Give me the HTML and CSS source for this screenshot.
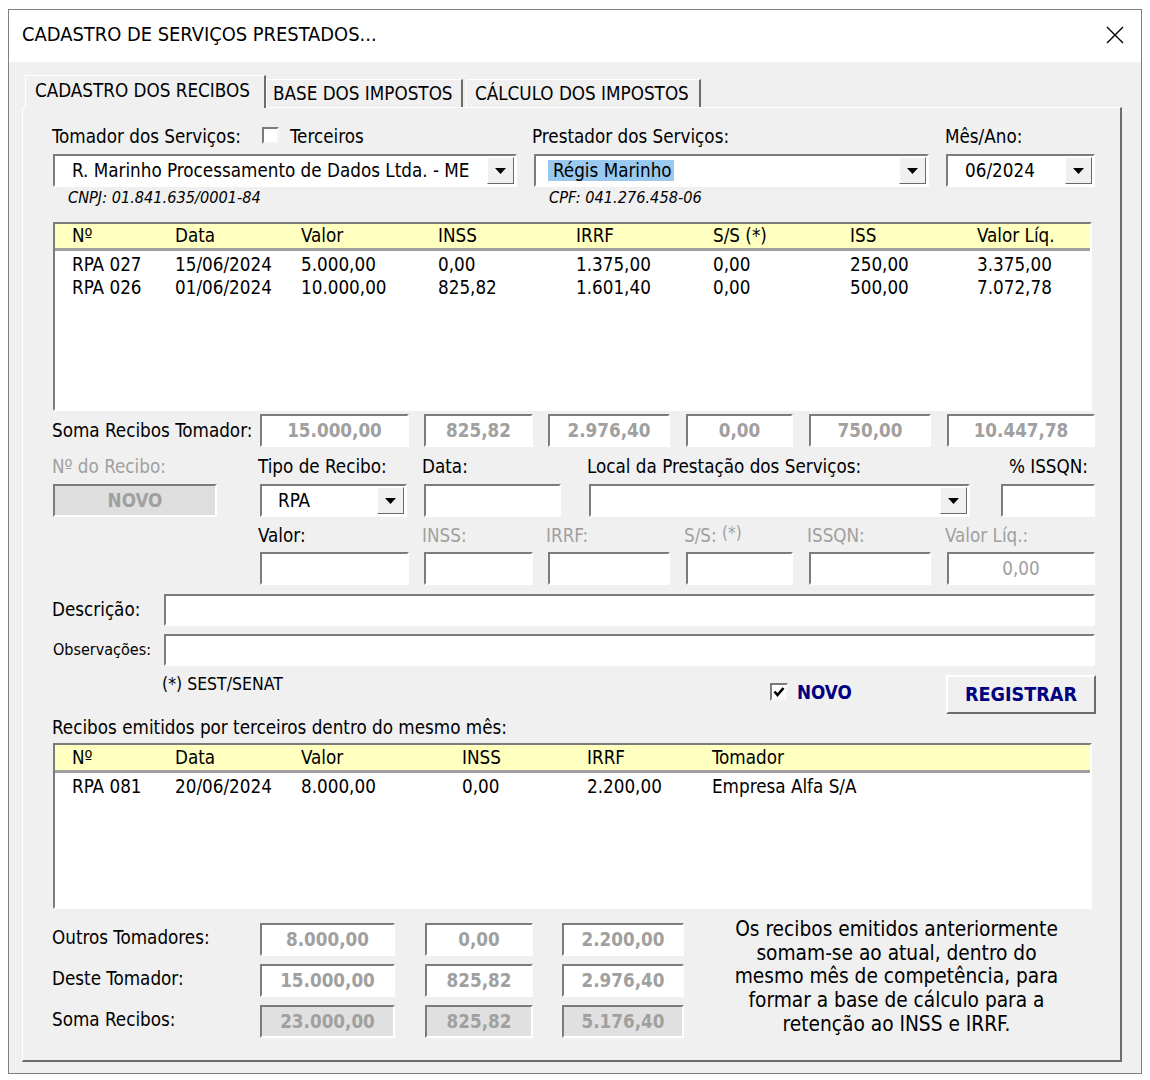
FILE: index.html
```html
<!DOCTYPE html>
<html lang="pt-BR">
<head>
<meta charset="utf-8">
<title>Cadastro de Serviços Prestados</title>
<link rel="stylesheet" href="styles.css">
</head>
<body>
<div class="window">
  <div class="titlebar">
    <span class="title">CADASTRO DE SERVIÇOS PRESTADOS...</span>
    <svg class="close" viewBox="0 0 20 20"><path d="M2 2L18 18M18 2L2 18" stroke="#000" stroke-width="1.4" fill="none"/></svg>
  </div>
  <div class="client">
    <div class="tabs">
      <div class="tab active">CADASTRO DOS RECIBOS</div>
      <div class="tab t2">BASE DOS IMPOSTOS</div>
      <div class="tab t3">CÁLCULO DOS IMPOSTOS</div>
    </div>
    <div class="panel">
      <div class="row rowA">
        <div class="cellA1"><span class="lblTom">Tomador dos Serviços:</span><span class="chk"></span><span>Terceiros</span></div>
        <div class="cellA2">Prestador dos Serviços:</div>
        <div>Mês/Ano:</div>
      </div>
      <div class="row rowB">
        <div class="combo cb1"><span class="ctext">R. Marinho Processamento de Dados Ltda. - ME</span><span class="ddbtn"><svg class="tri" viewBox="0 0 11 6"><path d="M0 0H11L5.5 6Z"/></svg></span></div>
        <div class="combo cb2"><span class="ctext"><span class="sel">Régis Marinho</span></span><span class="ddbtn"><svg class="tri" viewBox="0 0 11 6"><path d="M0 0H11L5.5 6Z"/></svg></span></div>
        <div class="combo cb3"><span class="ctext">06/2024</span><span class="ddbtn"><svg class="tri" viewBox="0 0 11 6"><path d="M0 0H11L5.5 6Z"/></svg></span></div>
      </div>
      <div class="row rowC">
        <div class="cellC1">CNPJ: 01.841.635/0001-84</div>
        <div class="cellC2">CPF: 041.276.458-06</div>
      </div>

      <div class="grid g1">
        <div class="ghead cols1"><span>Nº</span><span>Data</span><span>Valor</span><span>INSS</span><span>IRRF</span><span>S/S (*)</span><span>ISS</span><span>Valor Líq.</span></div>
        <div class="grows">
          <div class="cols1"><span>RPA 027</span><span>15/06/2024</span><span>5.000,00</span><span>0,00</span><span>1.375,00</span><span>0,00</span><span>250,00</span><span>3.375,00</span></div>
          <div class="cols1"><span>RPA 026</span><span>01/06/2024</span><span>10.000,00</span><span>825,82</span><span>1.601,40</span><span>0,00</span><span>500,00</span><span>7.072,78</span></div>
        </div>
      </div>

      <div class="cols7 sumrow">
        <span>Soma Recibos Tomador:</span>
        <div class="box ro w1">15.000,00</div>
        <div class="box ro w2">825,82</div>
        <div class="box ro w3">2.976,40</div>
        <div class="box ro w4">0,00</div>
        <div class="box ro w5">750,00</div>
        <div class="box ro w6">10.447,78</div>
      </div>

      <div class="row rowL2">
        <span class="l2a dis">Nº do Recibo:</span>
        <span class="l2b">Tipo de Recibo:</span>
        <span class="l2c">Data:</span>
        <span class="l2d">Local da Prestação dos Serviços:</span>
        <span class="l2e">% ISSQN:</span>
      </div>
      <div class="row rowI2">
        <div class="box novo">NOVO</div>
        <div class="combo rpa"><span class="ctext">RPA</span><span class="ddbtn"><svg class="tri" viewBox="0 0 11 6"><path d="M0 0H11L5.5 6Z"/></svg></span></div>
        <div class="box data"></div>
        <div class="combo local"><span class="ctext"></span><span class="ddbtn"><svg class="tri" viewBox="0 0 11 6"><path d="M0 0H11L5.5 6Z"/></svg></span></div>
        <div class="box pct"></div>
      </div>

      <div class="cols7 rowL3">
        <span></span>
        <span class="l3">Valor:</span>
        <span class="l3 dis">INSS:</span>
        <span class="l3 dis">IRRF:</span>
        <span class="l3 dis">S/S: <span class="sup">(*)</span></span>
        <span class="l3 dis">ISSQN:</span>
        <span class="l3 dis">Valor Líq.:</span>
      </div>
      <div class="cols7 rowI3">
        <span></span>
        <div class="box w1"></div>
        <div class="box w2"></div>
        <div class="box w3"></div>
        <div class="box w4"></div>
        <div class="box w5"></div>
        <div class="box w6 liq">0,00</div>
      </div>

      <div class="row rowD">
        <span class="lblD">Descrição:</span>
        <div class="box wide"></div>
      </div>
      <div class="row rowO">
        <span class="lblD lblO">Observações:</span>
        <div class="box wide"></div>
      </div>

      <div class="row rowS">
        <span class="sest">(*) SEST/SENAT</span>
        <span class="chk chk2"><svg viewBox="0 0 12 12" class="tick"><path d="M1.5 5.5L4.5 9L10.5 2" stroke="#000" stroke-width="2.6" fill="none"/></svg></span>
        <span class="novolbl">NOVO</span>
        <div class="btn">REGISTRAR</div>
      </div>

      <div class="row rowR">Recibos emitidos por terceiros dentro do mesmo mês:</div>

      <div class="grid g2">
        <div class="ghead cols2"><span>Nº</span><span>Data</span><span>Valor</span><span>INSS</span><span>IRRF</span><span>Tomador</span></div>
        <div class="grows">
          <div class="cols2"><span>RPA 081</span><span>20/06/2024</span><span>8.000,00</span><span>0,00</span><span>2.200,00</span><span>Empresa Alfa S/A</span></div>
        </div>
      </div>

      <div class="bottom">
        <div class="bleft">
          <div class="brow">
            <span>Outros Tomadores:</span>
            <div class="box ro b1">8.000,00</div>
            <div class="box ro b2">0,00</div>
            <div class="box ro b3">2.200,00</div>
          </div>
          <div class="brow">
            <span>Deste Tomador:</span>
            <div class="box ro b1">15.000,00</div>
            <div class="box ro b2">825,82</div>
            <div class="box ro b3">2.976,40</div>
          </div>
          <div class="brow last">
            <span>Soma Recibos:</span>
            <div class="box ro gray b1">23.000,00</div>
            <div class="box ro gray b2">825,82</div>
            <div class="box ro gray b3">5.176,40</div>
          </div>
        </div>
        <p class="note">Os recibos emitidos anteriormente<br>somam-se ao atual, dentro do<br>mesmo mês de competência, para<br>formar a base de cálculo para a<br>retenção ao INSS e IRRF.</p>
      </div>
    </div>
  </div>
</div>
</body>
</html>
```

FILE: styles.css
```css
* { box-sizing: border-box; }
html, body { margin: 0; padding: 0; background: #fff; }
body {
  font-family: "DejaVu Sans Condensed", "DejaVu Sans", sans-serif;
  font-stretch: condensed;
  font-size: 18.7px;
  line-height: 22px;
  color: #000;
}
.window {
  margin: 9px 0 0 8px;
  width: 1134px;
  height: 1065px;
  border: 1px solid #7f7f7f;
  background: #f0f0f0;
  display: flex;
  flex-direction: column;
}
.titlebar {
  height: 52px;
  flex: none;
  background: #fff;
  display: flex;
  align-items: center;
  justify-content: space-between;
  padding: 0 16px 2px 13px;
}
.title { font-size: 19.9px; }
.close { width: 20px; height: 20px; display: block; }
.client { flex: 1; padding: 13px 0 0 13px; }

.tabs { display: flex; align-items: flex-end; height: 33px; margin-bottom: -1px; }
.tab {
  height: 28px;
  margin-bottom: 1px;
  display: flex;
  align-items: center;
  border-top: 1px solid #fff;
  border-left: 1px solid #fff;
  border-right: 2px solid #6d6d6d;
  background: #f0f0f0;
  white-space: nowrap;
}
.tab.active {
  position: relative;
  z-index: 1;
  height: 33px;
  margin-bottom: 0;
  width: 241px;
  margin-left: 3px;
  padding: 0 0 3px 9px;
}
.t2 { width: 197px; padding-left: 6px; }
.t3 { width: 235px; margin-left: 3px; padding-left: 8px; }

.panel {
  width: 1100px;
  height: 955px;
  border-top: 1px solid #fff;
  border-left: 1px solid #fff;
  border-right: 2px solid #6d6d6d;
  border-bottom: 2px solid #6d6d6d;
  padding: 18px 25px 0 29px;
}
.row { display: flex; align-items: center; }
.dis { color: #a0a0a0; }

/* row A */
.rowA { height: 22px; }
.cellA1 { width: 480px; display: flex; align-items: center; }
.lblTom { width: 210px; }
.chk {
  width: 17px; height: 17px; background: #fff;
  border: 2px solid; border-color: #7c7c7c #f4f4f4 #f4f4f4 #7c7c7c;
  margin: -4px 11px 0 0;
  display: flex; align-items: center; justify-content: center;
}
.cellA2 { width: 413px; }

/* combos */
.rowB { margin-top: 6px; height: 33px; }
.combo {
  height: 33px; background: #fff;
  border: 2px solid; border-color: #7c7c7c #fff #fff #7c7c7c;
  display: flex; align-items: center;
  flex: none;
}
.ctext { flex: 1; white-space: nowrap; overflow: hidden; }
.ddbtn {
  width: 27px; height: 27px; flex: none; margin-right: 1px;
  background: #f0f0f0;
  border: 1px solid; border-color: #fff #696969 #696969 #fff;
  display: flex; align-items: center; justify-content: center;
}
.tri { width: 11px; height: 6px; display: block; }
.cb1 { width: 464px; margin-left: 1px; padding-left: 17px; }
.cb2 { width: 395px; margin-left: 17px; padding-left: 12px; }
.cb3 { width: 149px; margin-left: 17px; padding-left: 17px; }
.sel { background: #99c9ef; padding: 0 2px 0 5px; }

.rowC { margin-top: 2px; height: 18px; font-size: 16.2px; font-style: italic; line-height: 18px; }
.cellC1 { width: 480px; padding-left: 16px; }
.cellC2 { padding-left: 17px; }

/* grids */
.grid {
  background: #fff;
  border: 2px solid; border-color: #7c7c7c #fff #fff #7c7c7c;
  margin-left: 1px;
  width: 1039px;
}
.g1 { height: 189px; margin-top: 15px; }
.g2 { height: 166px; margin-top: 4px; }
.ghead {
  background: #ffffc0;
  height: 27px;
  border-bottom: 3px solid #a0a0a0;
  line-height: 24px;
}
.g2 .ghead { height: 28px; line-height: 25px; }
.grows { padding-top: 2px; line-height: 23px; }
.cols1 {
  display: grid;
  grid-template-columns: 103px 126px 137px 138px 137px 137px 127px 1fr;
  padding-left: 17px;
  white-space: nowrap;
}
.cols2 {
  display: grid;
  grid-template-columns: 103px 126px 161px 125px 125px 1fr;
  padding-left: 17px;
  white-space: nowrap;
}

/* seven column form grid */
.cols7 {
  display: grid;
  grid-template-columns: 208px 164px 124px 138px 123px 138px 148px;
  align-items: center;
}
.box {
  height: 33px; background: #fff;
  border: 2px solid; border-color: #7c7c7c #fff #fff #7c7c7c;
  display: flex; align-items: center; justify-content: center;
  flex: none;
}
.ro { color: #a0a0a0; font-weight: bold; }
.w1 { width: 149px; } .w2 { width: 109px; } .w3 { width: 122px; }
.w4 { width: 107px; } .w5 { width: 122px; } .w6 { width: 148px; }
.sumrow { margin-top: 3px; height: 33px; }

.rowL2 { margin-top: 9px; height: 22px; }
.l2a { width: 206px; }
.l2b { width: 164px; }
.l2c { width: 165px; }
.l2d { flex: 1; }
.l2e { padding-right: 7px; }

.rowI2 { margin-top: 6px; height: 33px; }
.novo { width: 164px; margin-left: 1px; background: #dedede; color: #a0a0a0; font-weight: bold; }
.rpa { width: 147px; margin-left: 43px; padding-left: 16px; }
.data { width: 137px; margin-left: 17px; }
.local { width: 381px; margin-left: 28px; }
.pct { width: 94px; margin-left: 31px; }

.rowL3 { margin-top: 8px; height: 22px; }
.l3 { margin-left: -2px; white-space: nowrap; }
.sup { font-size: 17px; position: relative; top: -3px; }
.rowI3 { margin-top: 5px; height: 33px; }
.liq { color: #a0a0a0; }

.rowD { margin-top: 9px; height: 32px; }
.rowO { margin-top: 8px; height: 32px; }
.lblD { width: 112px; flex: none; }
.lblO { font-size: 16px; padding-left: 1px; }
.wide { flex: 1; height: 32px; }

.rowS { margin-top: 9px; height: 39px; align-items: flex-start; }
.sest { width: 608px; margin-left: 110px; margin-top: -1px; font-size: 17.5px; line-height: 20px; flex: none; }
.chk2 { width: 18px; height: 18px; margin: 8px 0 0 0; }
.tick { width: 12px; height: 12px; display: block; }
.novolbl { margin: 7px 0 0 9px; color: #000080; font-weight: bold; }
.btn {
  margin-left: auto; margin-right: -1px;
  width: 150px; height: 39px;
  background: #f0f0f0;
  border: 2px solid; border-color: #fff #6d6d6d #6d6d6d #fff;
  display: flex; align-items: center; justify-content: center;
  color: #000080; font-weight: bold; font-size: 19.6px;
}

.rowR { margin-top: 3px; height: 22px; }

.bottom { display: flex; margin-top: 14px; }
.bleft { width: 631px; flex: none; }
.brow {
  display: grid;
  grid-template-columns: 208px 165px 137px 122px;
  align-items: center;
  height: 33px;
  margin-bottom: 8px;
}
.brow.last { margin-top: 1px; }
.brow > span { margin-top: -3px; }
.b1 { width: 135px; } .b2 { width: 108px; } .b3 { width: 122px; }
.gray { background: #e0e0e0; }
.note {
  flex: 1;
  margin: -5px 0 0 15px;
  text-align: center;
  font-size: 20.7px;
  line-height: 23.7px;
}
```
